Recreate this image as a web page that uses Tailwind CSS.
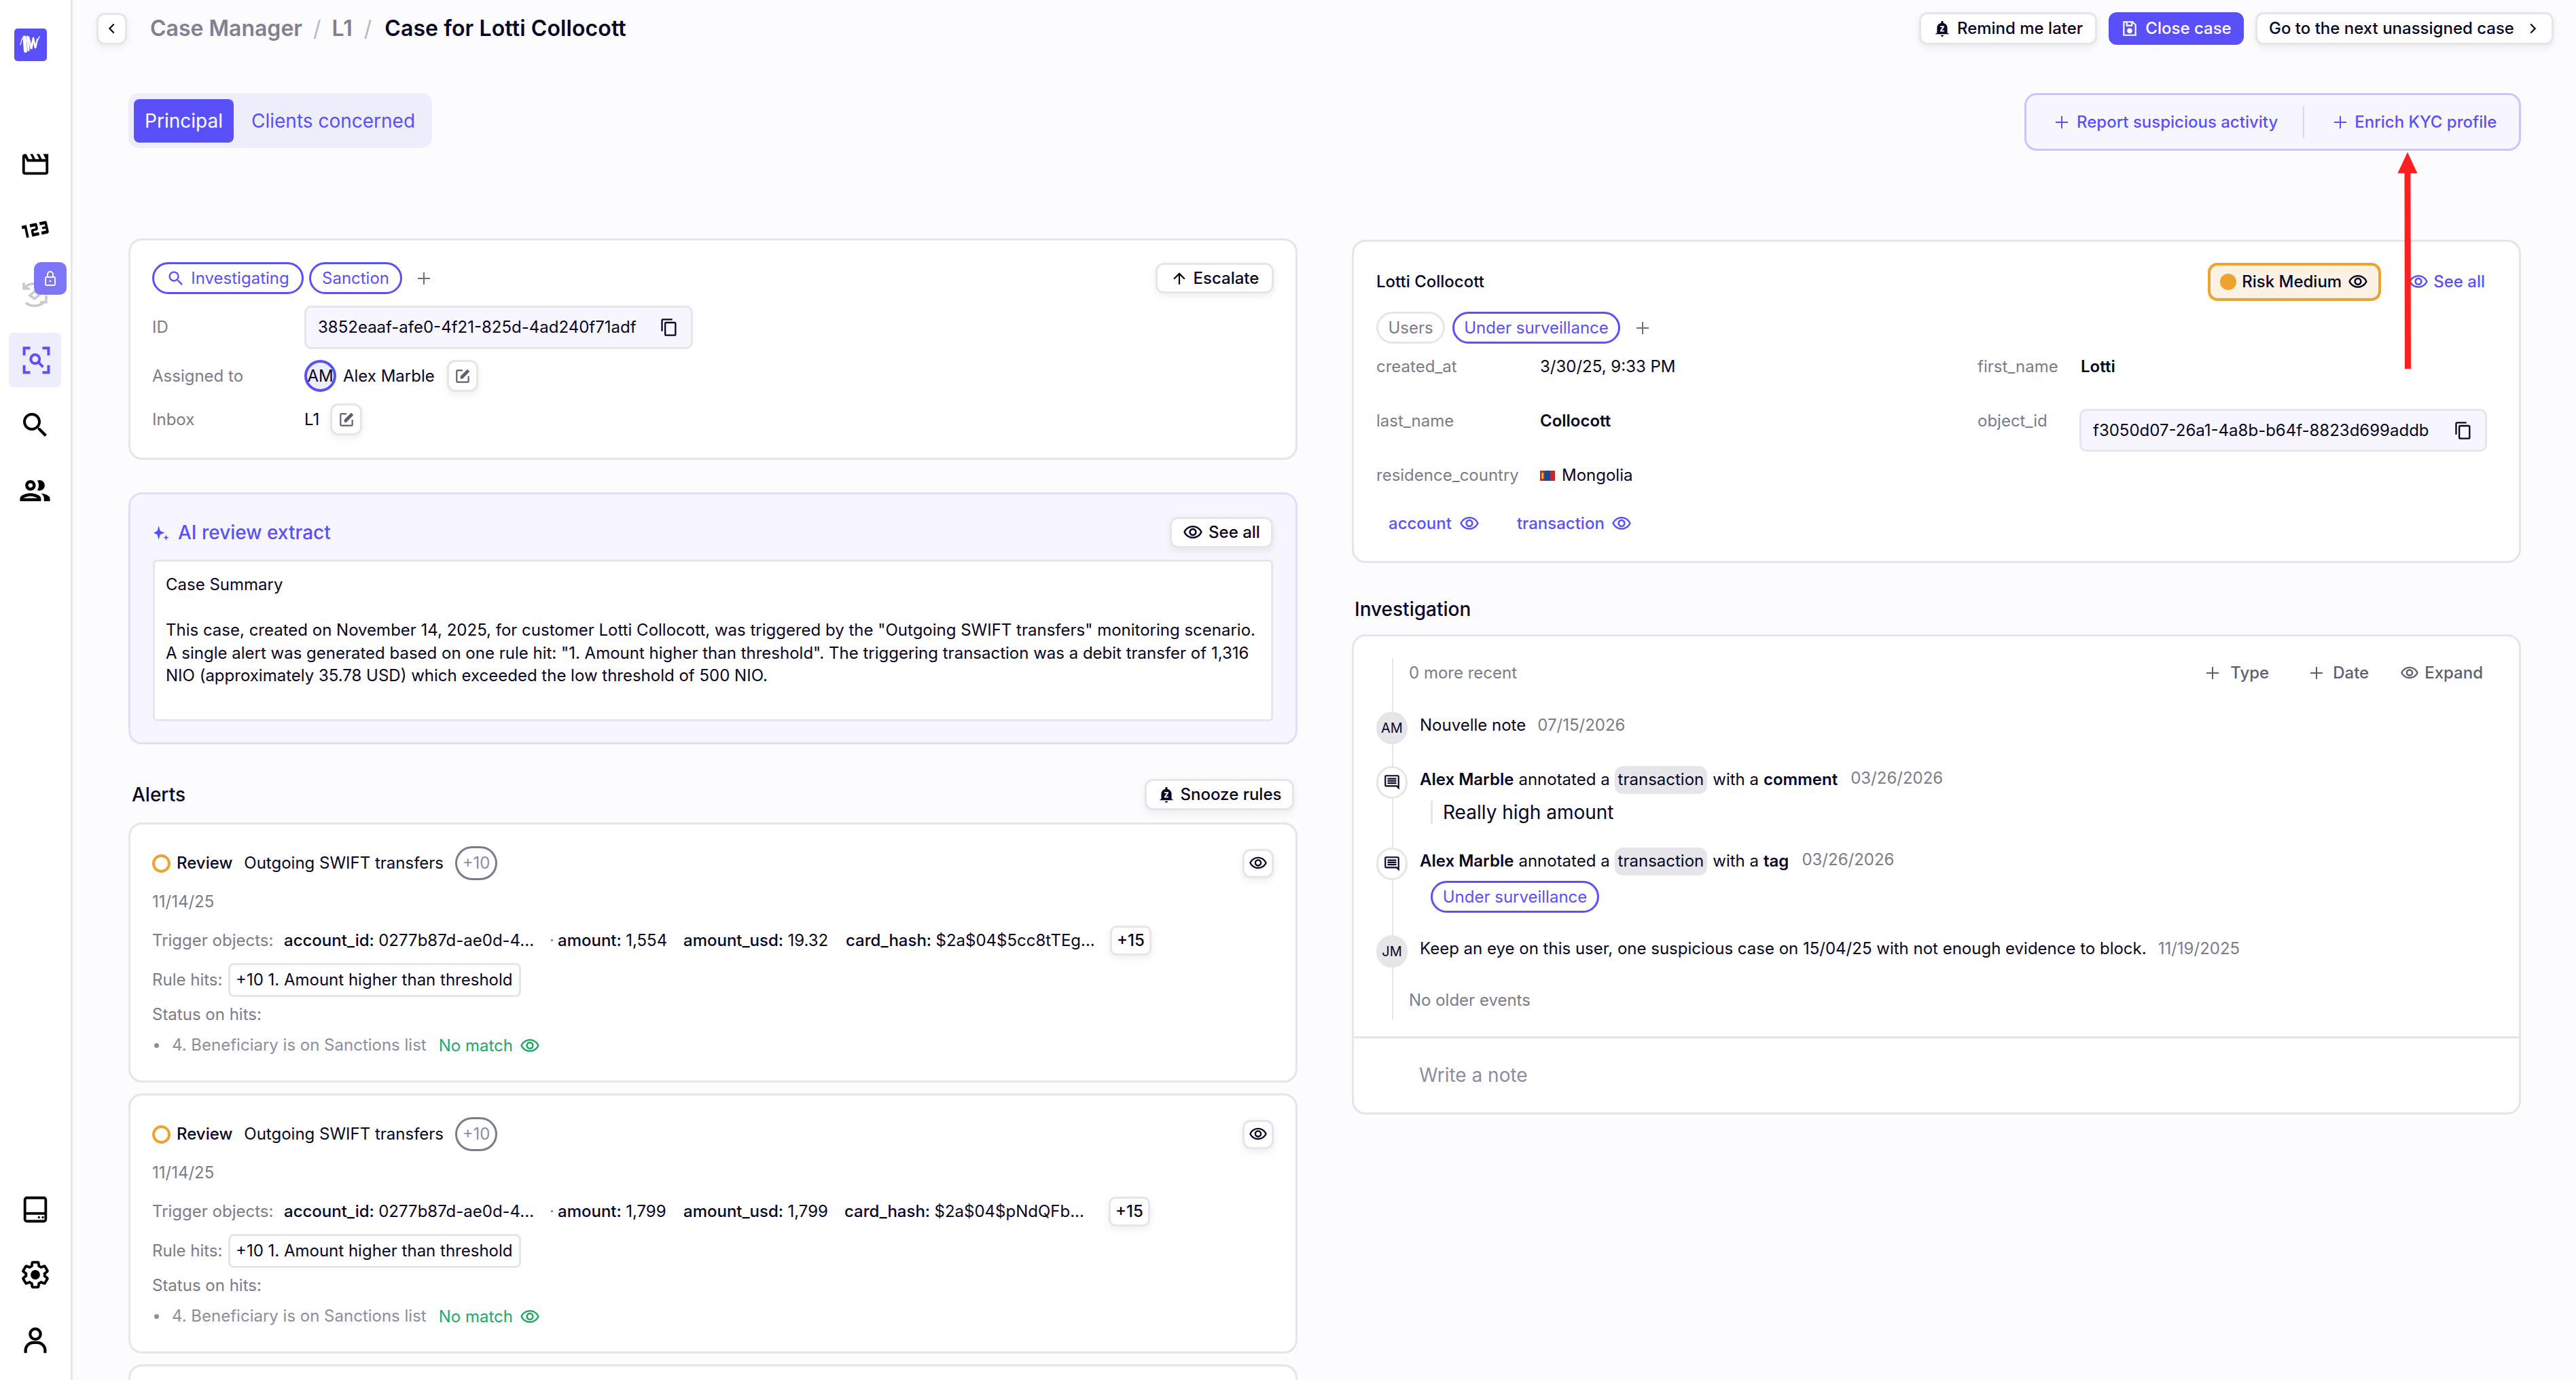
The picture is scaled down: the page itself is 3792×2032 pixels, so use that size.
<!DOCTYPE html>
<html lang="en">
<head>
    <meta charset="UTF-8">
    <title>Case for Lotti Collocott</title>
    <script src="https://cdn.jsdelivr.net/npm/@tailwindcss/browser@4"></script>
</head>
<body class="bg-[#fcfcff] text-[#080525] font-[Inter,sans-serif] text-[24px]">

<!-- Shared icons -->
<svg class="hidden">
    <symbol id="eye" viewBox="0 0 24 24"><path fill="currentColor" d="M12 6c3.79 0 7.17 2.13 8.82 5.5C19.17 14.87 15.79 17 12 17s-7.17-2.13-8.82-5.5C4.83 8.13 8.21 6 12 6m0-2C7 4 2.73 7.11 1 11.5 2.73 15.89 7 19 12 19s9.27-3.11 11-7.5C21.27 7.11 17 4 12 4zm0 5c1.38 0 2.5 1.12 2.5 2.5S13.38 14 12 14s-2.5-1.12-2.5-2.5S10.62 9 12 9m0-2c-2.48 0-4.5 2.02-4.5 4.5S9.52 16 12 16s4.5-2.02 4.5-4.5S14.48 7 12 7z"/></symbol>
    <symbol id="plus" viewBox="0 0 24 24"><path fill="none" stroke="currentColor" stroke-width="2" d="M12 3v18M3 12h18"/></symbol>
    <symbol id="copy" viewBox="0 0 24 24"><path fill="currentColor" d="M16 1H4c-1.1 0-2 .9-2 2v14h2V3h12V1zm3 4H8c-1.1 0-2 .9-2 2v14c0 1.1.9 2 2 2h11c1.1 0 2-.9 2-2V7c0-1.1-.9-2-2-2zm0 16H8V7h11v14z"/></symbol>
    <symbol id="edit" viewBox="0 0 24 24"><path fill="none" stroke="currentColor" stroke-width="2" d="M12 4H5a1 1 0 0 0-1 1v14a1 1 0 0 0 1 1h14a1 1 0 0 0 1-1v-7"/><path fill="currentColor" d="M9 15.5V12L18.5 2.5l3 3L12 15.5z"/></symbol>
    <symbol id="bell" viewBox="0 0 24 24"><path fill="currentColor" d="M12 23c1.1 0 2-.9 2-2h-4c0 1.1.9 2 2 2zm7-5v-7c0-3.07-2.13-5.64-5.5-6.32V3c0-.83-.67-1.5-1.5-1.5s-1.5.67-1.5 1.5v1.68C7.13 5.36 5 7.92 5 11v7l-2 1v.5h18V19l-2-1z"/><path fill="#fff" d="M9.3 8.5h5.4v1.6l-3.2 4.4h3.2v1.7H9.3v-1.6l3.2-4.4H9.3z"/></symbol>
    <symbol id="comment" viewBox="0 0 24 24"><path fill="currentColor" d="M21.99 4c0-1.1-.89-2-1.99-2H4c-1.1 0-2 .9-2 2v12c0 1.1.9 2 2 2h14l4 4-.01-18zM20 4v13.17L18.83 16H4V4h16zM6 12h12v2H6zm0-3h12v2H6zm0-3h12v2H6z"/></symbol>
</svg>

<div class="flex h-[2032px] overflow-hidden relative">

    <!-- Sidebar -->
    <aside class="w-[107px] shrink-0 border-r-[3px] border-[#e5e5ea] bg-white flex flex-col relative">
        <div class="h-[194px] pt-[42px] pl-[21px]">
            <svg class="w-[48px] h-[48px]" viewBox="0 0 48 48"><rect width="48" height="48" rx="5" fill="#5a50fa"/><g fill="none" stroke="#fff" stroke-linecap="round"><path stroke-width="1.200" d="M9 24l3-10"/><path stroke-width="5" d="M15 13l1.500 20"/><path stroke-width="3" d="M19 12l2 20"/><path stroke-width="3" d="M21 13l4 17 3-15"/><path stroke-width="2.500" d="M28 14l3 15 3-13"/><path stroke-width="1.500" d="M35 16l2-4"/></g></svg>
        </div>
        <div class="h-[96px] flex items-center justify-center pr-[1px]"><svg class="w-[46px] h-[46px]" viewBox="0 0 24 24"><path d="M4 6.47L5.76 10H20v8H4V6.47M22 4h-4l2 4h-3l-2-4h-2l2 4h-3l-2-4H8l2 4H7L5 4H4c-1.1 0-1.99.9-1.99 2L2 18c0 1.1.9 2 2 2h16c1.1 0 2-.9 2-2V4z"/></svg></div>
        <div class="h-[96px] flex items-center justify-center pr-[1px]"><svg class="w-[40px] h-[22px] -rotate-12" viewBox="3.500 8.500 16.500 7" preserveAspectRatio="none"><path d="M7 15H5.5v-4.5H4V9h3zM13.5 13.5h-3v-1h2c.55 0 1-.45 1-1V10c0-.55-.45-1-1-1H9v1.5h3v1h-2c-.55 0-1 .45-1 1V15h4.5zM19.5 14v-4c0-.55-.45-1-1-1H15v1.5h3v1h-2v1h2v1h-3V15h3.5c.55 0 1-.45 1-1z"/></svg></div>
        <div class="h-[96px] flex items-center justify-center pr-[1px]"><svg class="w-[37px] h-[39px]" viewBox="0 0 37 39" fill="none" stroke="#c9c9d0" stroke-width="3.500"><path d="M2 1v9h9"/><path d="M3 9c4-5 10-7 17-6"/><path d="M18 14l7 5-7 6-7-5z"/><path d="M5 31c8 6 20 6 28-2"/><path d="M35 20v10h-9"/></svg></div>
        <div class="mx-[13px] w-[77px] h-[80px] my-[8px] rounded-[6px] bg-[#eeedfb] flex items-center justify-center text-[#5a50fa]">
            <svg class="w-[43px] h-[43px] ml-[3px]" viewBox="0 0 24 24" fill="none" stroke="currentColor" stroke-width="2.200"><path d="M7 2H2v6M17 2h5v6M2 16v6h5M22 16v6h-5"/><circle cx="11" cy="11" r="3.600"/><path d="M13.500 13.500l4 4"/></svg>
        </div>
        <div class="h-[96px] flex items-center justify-center pr-[1px]"><svg class="w-[48px] h-[48px]" viewBox="0 0 24 24"><path d="M15.5 14h-.79l-.28-.27C15.41 12.59 16 11.11 16 9.5 16 5.91 13.09 3 9.5 3S3 5.91 3 9.5 5.91 16 9.5 16c1.61 0 3.09-.59 4.23-1.57l.27.28v.79l5 4.99L20.49 19l-4.99-5zm-6 0C7.01 14 5 11.99 5 9.5S7.01 5 9.5 5 14 7.01 14 9.5 11.99 14 9.5 14z"/></svg></div>
        <div class="h-[96px] flex items-center justify-center pr-[1px]"><svg class="w-[53px] h-[53px]" viewBox="0 0 24 24"><path d="M9 13.75c-2.34 0-7 1.17-7 3.5V19h14v-1.750c0-2.330-4.660-3.500-7-3.500zM4.340 17c.84-.58 2.870-1.250 4.660-1.250s3.820.67 4.660 1.250H4.340zM9 12c1.930 0 3.500-1.570 3.500-3.500S10.930 5 9 5 5.500 6.570 5.500 8.500 7.070 12 9 12zm0-5c.83 0 1.500.67 1.500 1.500S9.830 10 9 10s-1.500-.67-1.500-1.500S8.170 7 9 7zm7.040 6.810c1.160.84 1.960 1.960 1.960 3.440V19h4v-1.750c0-2.020-3.500-3.170-5.960-3.440zM15 12c1.930 0 3.500-1.570 3.500-3.500S16.930 5 15 5c-.54 0-1.040.13-1.500.35.630.89 1 1.980 1 3.150s-.37 2.260-1 3.150c.46.22.96.35 1.500.35z"/></svg></div>

        <div class="mt-auto pb-[11px]">
            <div class="h-[96px] flex items-center justify-center pr-[1px]"><svg class="w-[46px] h-[46px]" viewBox="0 0 24 24" fill="none" stroke="#000" stroke-width="2"><rect x="4" y="3" width="16" height="18" rx="1.5"/><path d="M4 15h16"/><path d="M14 18h1.5M17 18h1.5" stroke-width="1.6"/></svg></div>
            <div class="h-[96px] flex items-center justify-center pr-[1px]"><svg class="w-[46px] h-[46px]" viewBox="0 0 24 24"><path fill="none" stroke="#000" stroke-width="2" d="M19.14 12.94c.04-.3.06-.61.06-.94 0-.32-.02-.64-.07-.94l2.03-1.58c.18-.14.23-.41.12-.61l-1.92-3.32c-.12-.22-.37-.29-.59-.22l-2.39.96c-.5-.38-1.03-.7-1.62-.94L14.4 2.81c-.04-.24-.24-.41-.48-.41h-3.84c-.24 0-.43.17-.47.41L9.25 5.35c-.59.24-1.13.57-1.62.94l-2.39-.96c-.22-.08-.47 0-.59.22L2.74 8.87c-.12.21-.08.47.12.61l2.03 1.58c-.05.3-.09.63-.09.94s.02.64.07.94l-2.03 1.58c-.18.14-.23.41-.12.61l1.92 3.32c.12.22.37.29.59.22l2.39-.96c.5.38 1.03.7 1.62.94l.36 2.54c.05.24.24.41.48.41h3.84c.24 0 .44-.17.47-.41l.36-2.54c.59-.24 1.13-.56 1.62-.94l2.39.96c.22.08.47 0 .59-.22l1.92-3.32c.12-.22.07-.47-.12-.61z"/><circle cx="12" cy="12" r="3.6"/></svg></div>
            <div class="h-[96px] flex items-center justify-center pr-[1px]"><svg class="w-[46px] h-[46px]" viewBox="0 0 24 24" fill="none" stroke="#000" stroke-width="2.2"><circle cx="12" cy="7.5" r="4"/><path d="M4.5 22v-2a6 6 0 0 1 6-6h3a6 6 0 0 1 6 6v2"/></svg></div>
        </div>

        <!-- Lock badge over the nav icon -->
        <div class="absolute left-[50px] top-[386px] w-[48px] h-[48px] rounded-[10px] bg-[#7d77f8] flex items-center justify-center">
            <svg class="w-[24px] h-[24px]" viewBox="0 0 24 24" fill="none" stroke="#fff" stroke-width="1.800"><rect x="5" y="10" width="14" height="12" rx="1.500"/><path d="M8 10V6a4 4 0 0 1 8 0v4"/><circle cx="12" cy="16" r="1.300" fill="#fff" stroke="none"/></svg>
        </div>
    </aside>

    <!-- Main -->
    <main class="flex-1 min-w-0">

        <!-- Top bar -->
        <header class="h-[48px] mt-[18px] pl-[35px] pr-[33px] flex items-center">
            <button class="w-[45px] h-[47px] rounded-[12px] border-[3px] border-[#e5e5ea] bg-white shadow-[0_4px_12px_rgba(0,0,0,0.07)] flex items-center justify-center">
                <svg class="w-[22px] h-[22px]" viewBox="0 0 24 24" fill="none" stroke="#080525" stroke-width="2.4"><path d="M15 5l-7 7 7 7"/></svg>
            </button>
            <div class="ml-[34px] flex items-center text-[32px] font-semibold">
                <span class="text-[#81808f]">Case Manager</span>
                <span class="text-[#b9b9c3] ml-[16px] font-normal">/</span>
                <span class="text-[#81808f] ml-[16px]">L1</span>
                <span class="text-[#b9b9c3] ml-[17px] font-normal">/</span>
                <span class="ml-[19px] tracking-[0.1px]">Case for Lotti Collocott</span>
            </div>
            <div class="ml-auto flex items-center gap-[17px]">
                <button class="h-[48px] w-[262px] rounded-[12px] border-[3px] border-[#e5e5ea] bg-white shadow-[0_4px_12px_rgba(0,0,0,0.07)] flex items-center justify-center gap-[9px] font-medium">
                    <svg class="w-[26px] h-[26px]"><use href="#bell"/></svg>Remind me later
                </button>
                <button class="h-[48px] w-[199px] rounded-[12px] bg-[#5a50fa] text-white flex items-center justify-center gap-[10px] font-medium">
                    <svg class="w-[26px] h-[26px]" viewBox="0 0 24 24" fill="none" stroke="#fff" stroke-width="2"><path d="M4 3h12l4 4v14H4z"/><path d="M8 3v5h7V3"/><circle cx="12" cy="15" r="2.5" fill="#fff"/></svg>Close case
                </button>
                <button class="h-[48px] w-[439px] rounded-[12px] border-[3px] border-[#e5e5ea] bg-white shadow-[0_4px_12px_rgba(0,0,0,0.07)] flex items-center justify-center gap-[16px] font-medium">
                    Go to the next unassigned case
                    <svg class="w-[22px] h-[22px]" viewBox="0 0 24 24" fill="none" stroke="#080525" stroke-width="2.4"><path d="M9 5l7 7-7 7"/></svg>
                </button>
            </div>
        </header>

        <div class="pl-[82px] pr-[81px]">

            <!-- Tabs and actions -->
            <div class="mt-[71px] flex justify-between items-start">
                <div class="w-[447px] h-[81px] rounded-[15px] bg-[#eeedfb] px-[8px] py-[8px] flex items-center text-[28px]">
                    <div class="w-[147px] h-[64px] rounded-[8px] bg-[#5a50fa] text-white flex items-center justify-center">Principal</div>
                    <div class="ml-[26px] text-[#5a50fa]">Clients concerned</div>
                </div>
                <div class="w-[731px] h-[85px] rounded-[18px] border-[3px] border-[#c9c6fd] bg-[#f7f6ff] flex items-center text-[#5a50fa] font-medium pl-[40px]">
                    <svg class="w-[24px] h-[24px]"><use href="#plus"/></svg>
                    <span class="ml-[10px]">Report suspicious activity</span>
                    <div class="w-[2px] h-[48px] bg-[#d9d7fd] ml-[37px]"></div>
                    <svg class="w-[24px] h-[24px] ml-[41px]"><use href="#plus"/></svg>
                    <span class="ml-[9px]">Enrich KYC profile</span>
                </div>
            </div>

            <!-- Two columns -->
            <div class="mt-[129px] grid grid-cols-[1721px_1721px] gap-x-[80px]">

                <!-- Left column -->
                <div>
                    <section class="h-[326px] rounded-[20px] border-[3px] border-[#e5e5ea] bg-white px-[32px] pt-[32px]">
                        <div class="h-[47px] flex items-center justify-between">
                            <div class="flex items-center">
                                <div class="w-[223px] h-[47px] rounded-full border-[3px] border-[#5a50fa] text-[#5a50fa] flex items-center justify-center gap-[8px]">
                                    <svg class="w-[28px] h-[28px]" viewBox="0 0 24 24"><path fill="currentColor" d="M15.5 14h-.79l-.28-.27C15.41 12.59 16 11.11 16 9.5 16 5.91 13.09 3 9.5 3S3 5.91 3 9.5 5.91 16 9.5 16c1.61 0 3.09-.59 4.23-1.57l.27.28v.79l5 4.99L20.49 19l-4.99-5zm-6 0C7.01 14 5 11.99 5 9.5S7.01 5 9.5 5 14 7.01 14 9.5 11.99 14 9.5 14z"/></svg>Investigating
                                </div>
                                <div class="ml-[8px] w-[137px] h-[47px] rounded-full border-[3px] border-[#5a50fa] text-[#5a50fa] flex items-center justify-center">Sanction</div>
                                <svg class="ml-[20px] w-[24px] h-[24px] text-[#6f6e80]"><use href="#plus"/></svg>
                            </div>
                            <button class="w-[174px] h-[45px] rounded-[12px] border-[3px] border-[#e5e5ea] bg-white shadow-[0_4px_12px_rgba(0,0,0,0.07)] flex items-center justify-center gap-[8px] font-medium">
                                <svg class="w-[26px] h-[26px]" viewBox="0 0 24 24"><path d="M4 12l1.41 1.41L11 7.83V20h2V7.83l5.58 5.59L20 12l-8-8-8 8z"/></svg>Escalate
                            </button>
                        </div>
                        <div class="mt-[17px] flex items-center">
                            <div class="w-[224px] text-[#7c7b89]">ID</div>
                            <div class="w-[572px] h-[64px] rounded-[10px] border-[3px] border-[#e5e5ea] bg-[#f7f6ff] flex items-center justify-between pl-[17px] pr-[18px]">
                                <span>3852eaaf-afe0-4f21-825d-4ad240f71adf</span>
                                <svg class="w-[28px] h-[28px]"><use href="#copy"/></svg>
                            </div>
                        </div>
                        <div class="mt-[16px] flex items-center">
                            <div class="w-[224px] text-[#7c7b89]">Assigned to</div>
                            <div class="w-[47px] h-[47px] rounded-full border-[4px] border-[#5a50fa] bg-[#eeedfb] flex items-center justify-center text-[24px]">AM</div>
                            <span class="ml-[10px]">Alex Marble</span>
                            <button class="ml-[18px] w-[46px] h-[47px] rounded-[12px] border-[3px] border-[#e5e5ea] bg-white shadow-[0_4px_12px_rgba(0,0,0,0.07)] flex items-center justify-center">
                                <svg class="w-[26px] h-[26px] text-[#5f5e6e]"><use href="#edit"/></svg>
                            </button>
                        </div>
                        <div class="mt-[17px] flex items-center">
                            <div class="w-[224px] text-[#7c7b89]">Inbox</div>
                            <span>L1</span>
                            <button class="ml-[16px] w-[47px] h-[47px] rounded-[12px] border-[3px] border-[#e5e5ea] bg-white shadow-[0_4px_12px_rgba(0,0,0,0.07)] flex items-center justify-center">
                                <svg class="w-[26px] h-[26px] text-[#5f5e6e]"><use href="#edit"/></svg>
                            </button>
                        </div>
                    </section>

                    <section class="mt-[48px] h-[371px] rounded-[20px] border-[3px] border-[#e0deff] bg-[#f7f6ff] px-[33px] pt-[33px]">
                        <div class="h-[46px] flex items-center justify-between">
                            <div class="flex items-center text-[#5a50fa] text-[28px] font-medium">
                                <svg class="w-[26px] h-[28px]" viewBox="0 0 24 24" fill="currentColor"><path d="M8 3l2 7 6 2.500-6 2.500-2 7-2-7-5-2.500 5-2.500z"/><path d="M18 15l1 3 3 1-3 1-1 3-1-3-3-1 3-1z"/></svg>
                                <span class="ml-[11px]">AI review extract</span>
                            </div>
                            <button class="w-[152px] h-[46px] rounded-[12px] border-[3px] border-[#e5e5ea] bg-white shadow-[0_4px_12px_rgba(0,0,0,0.07)] flex items-center justify-center gap-[8px] font-medium">
                                <svg class="w-[30px] h-[30px]"><use href="#eye"/></svg>See all
                            </button>
                        </div>
                        <div class="mt-[17px] h-[238px] rounded-[6px] border-[3px] border-[#e5e5ea] bg-white pl-[16px] pr-[16px] pt-[17px] leading-[33.6px]">
                            <p>Case Summary</p>
                            <p class="mt-[33.6px]">This case, created on November 14, 2025, for customer Lotti Collocott, was triggered by the "Outgoing SWIFT transfers" monitoring scenario.<br>A single alert was generated based on one rule hit: "1. Amount higher than threshold". The triggering transaction was a debit transfer of 1,316<br>NIO (approximately 35.78 USD) which exceeded the low threshold of 500 NIO.</p>
                        </div>
                    </section>

                    <div class="mt-[51px] h-[46px] flex items-center justify-between pl-[5px] pr-[5px]">
                        <h2 class="text-[28px] font-medium">Alerts</h2>
                        <button class="w-[220px] h-[46px] rounded-[12px] border-[3px] border-[#e5e5ea] bg-white shadow-[0_4px_12px_rgba(0,0,0,0.07)] flex items-center justify-center gap-[8px] font-medium">
                            <svg class="w-[26px] h-[26px]"><use href="#bell"/></svg>Snooze rules
                        </button>
                    </div>

                    <!-- Alert 1 -->
                    <article class="mt-[18px] h-[383px] rounded-[20px] border-[3px] border-[#e5e5ea] bg-white px-[32px] pt-[32px]">
                        <div class="h-[50px] flex items-center">
                            <div class="w-[27px] h-[27px] rounded-full border-[4px] border-[#eea32f]"></div>
                            <span class="ml-[9px] font-medium">Review</span>
                            <span class="ml-[17px]">Outgoing SWIFT transfers</span>
                            <div class="ml-[17px] w-[62px] h-[50px] rounded-full border-[3px] border-[#7c7b89] text-[#8e8d9b] flex items-center justify-center">+10</div>
                            <button class="ml-auto w-[46px] h-[43px] rounded-[12px] border-[3px] border-[#e5e5ea] bg-white shadow-[0_4px_12px_rgba(0,0,0,0.07)] flex items-center justify-center">
                                <svg class="w-[28px] h-[28px]"><use href="#eye"/></svg>
                            </button>
                        </div>
                        <div class="mt-[15px] h-[34px] flex items-center text-[#7c7b89]">11/14/25</div>
                        <div class="mt-[18px] h-[44px] flex items-center whitespace-nowrap">
                            <span class="w-[194px] text-[#7c7b89]">Trigger objects:</span>
                            <span class="w-[391px] font-medium">account_id: <span class="font-normal">0277b87d-ae0d-4...</span></span>
                            <span class="w-[12px] text-[#7c7b89]">·</span>
                            <span class="w-[185px] font-medium">amount: <span class="font-normal">1,554</span></span>
                            <span class="w-[239px] font-medium">amount_usd: <span class="font-normal">19.32</span></span>
                            <span class="w-[389px] font-medium">card_hash: <span class="font-normal">$2a$04$5cc8tTEg...</span></span>
                            <button class="w-[61px] h-[44px] rounded-[10px] border-[3px] border-[#e5e5ea] bg-white shadow-[0_4px_12px_rgba(0,0,0,0.07)] font-medium">+15</button>
                        </div>
                        <div class="mt-[11px] h-[50px] flex items-center">
                            <span class="w-[112px] text-[#7c7b89]">Rule hits:</span>
                            <div class="w-[431px] h-[50px] rounded-[8px] border-[3px] border-[#e5e5ea] bg-white flex items-center pl-[8px]">+10 1. Amount higher than threshold</div>
                        </div>
                        <div class="mt-[9px] h-[34px] flex items-center text-[#7c7b89]">Status on hits:</div>
                        <div class="mt-[11px] h-[34px] flex items-center">
                            <div class="ml-[3px] w-[7px] h-[7px] rounded-full bg-[#8e8d9b]"></div>
                            <span class="ml-[19px] text-[#8e8d9b]">4. Beneficiary is on Sanctions list</span>
                            <span class="ml-[18px] mt-[2px] text-[#22a868]">No match</span>
                            <svg class="ml-[10px] mt-[2px] w-[30px] h-[30px] text-[#22a868]"><use href="#eye"/></svg>
                        </div>
                    </article>

                    <!-- Alert 2 -->
                    <article class="mt-[16px] h-[383px] rounded-[20px] border-[3px] border-[#e5e5ea] bg-white px-[32px] pt-[32px]">
                        <div class="h-[50px] flex items-center">
                            <div class="w-[27px] h-[27px] rounded-full border-[4px] border-[#eea32f]"></div>
                            <span class="ml-[9px] font-medium">Review</span>
                            <span class="ml-[17px]">Outgoing SWIFT transfers</span>
                            <div class="ml-[17px] w-[62px] h-[50px] rounded-full border-[3px] border-[#7c7b89] text-[#8e8d9b] flex items-center justify-center">+10</div>
                            <button class="ml-auto w-[46px] h-[43px] rounded-[12px] border-[3px] border-[#e5e5ea] bg-white shadow-[0_4px_12px_rgba(0,0,0,0.07)] flex items-center justify-center">
                                <svg class="w-[28px] h-[28px]"><use href="#eye"/></svg>
                            </button>
                        </div>
                        <div class="mt-[15px] h-[34px] flex items-center text-[#7c7b89]">11/14/25</div>
                        <div class="mt-[18px] h-[44px] flex items-center whitespace-nowrap">
                            <span class="w-[194px] text-[#7c7b89]">Trigger objects:</span>
                            <span class="w-[391px] font-medium">account_id: <span class="font-normal">0277b87d-ae0d-4...</span></span>
                            <span class="w-[12px] text-[#7c7b89]">·</span>
                            <span class="w-[185px] font-medium">amount: <span class="font-normal">1,799</span></span>
                            <span class="w-[237px] font-medium">amount_usd: <span class="font-normal">1,799</span></span>
                            <span class="w-[389px] font-medium">card_hash: <span class="font-normal">$2a$04$pNdQFb...</span></span>
                            <button class="w-[61px] h-[44px] rounded-[10px] border-[3px] border-[#e5e5ea] bg-white shadow-[0_4px_12px_rgba(0,0,0,0.07)] font-medium">+15</button>
                        </div>
                        <div class="mt-[11px] h-[50px] flex items-center">
                            <span class="w-[112px] text-[#7c7b89]">Rule hits:</span>
                            <div class="w-[431px] h-[50px] rounded-[8px] border-[3px] border-[#e5e5ea] bg-white flex items-center pl-[8px]">+10 1. Amount higher than threshold</div>
                        </div>
                        <div class="mt-[9px] h-[34px] flex items-center text-[#7c7b89]">Status on hits:</div>
                        <div class="mt-[11px] h-[34px] flex items-center">
                            <div class="ml-[3px] w-[7px] h-[7px] rounded-full bg-[#8e8d9b]"></div>
                            <span class="ml-[19px] text-[#8e8d9b]">4. Beneficiary is on Sanctions list</span>
                            <span class="ml-[18px] mt-[2px] text-[#22a868]">No match</span>
                            <svg class="ml-[10px] mt-[2px] w-[30px] h-[30px] text-[#22a868]"><use href="#eye"/></svg>
                        </div>
                    </article>

                    <!-- Alert 3, cut by the window -->
                    <article class="mt-[16px] h-[383px] rounded-[20px] border-[3px] border-[#e5e5ea] bg-white"></article>
                </div>

                <!-- Right column -->
                <div class="pt-[2px]">
                    <section class="h-[476px] rounded-[20px] border-[3px] border-[#e5e5ea] bg-white pl-[33px] pr-[33px] pt-[31px]">
                        <div class="h-[56px] flex items-center">
                            <span class="font-medium">Lotti Collocott</span>
                            <div class="ml-auto w-[255px] h-[56px] rounded-[14px] border-[4px] border-[#eea32f] bg-[#fbf2e4] flex items-center pl-[14px]">
                                <div class="w-[24px] h-[24px] rounded-full bg-[#eea32f]"></div>
                                <span class="ml-[8px] font-medium">Risk Medium</span>
                                <svg class="ml-[9px] w-[30px] h-[30px]"><use href="#eye"/></svg>
                            </div>
                            <div class="ml-[40px] mr-[17px] flex items-center text-[#5a50fa] gap-[7px] font-medium">
                                <svg class="w-[30px] h-[30px]"><use href="#eye"/></svg>See all
                            </div>
                        </div>
                        <div class="mt-[16px] h-[47px] flex items-center">
                            <div class="w-[101px] h-[47px] rounded-full border-[3px] border-[#e5e5ea] text-[#7c7b89] flex items-center justify-center">Users</div>
                            <div class="ml-[11px] w-[247px] h-[47px] rounded-full border-[3px] border-[#5a50fa] text-[#5a50fa] flex items-center justify-center">Under surveillance</div>
                            <svg class="ml-[21px] w-[24px] h-[24px] text-[#6f6e80]"><use href="#plus"/></svg>
                        </div>
                        <div class="mt-[14px] h-[40px] flex items-center">
                            <span class="w-[241px] text-[#7c7b89]">created_at</span>
                            <span class="w-[644px]">3/30/25, 9:33 PM</span>
                            <span class="w-[152px] text-[#7c7b89]">first_name</span>
                            <span class="font-semibold">Lotti</span>
                        </div>
                        <div class="mt-[40px] h-[40px] flex items-start">
                            <span class="h-[40px] leading-[40px] w-[241px] text-[#7c7b89]">last_name</span>
                            <span class="h-[40px] leading-[40px] w-[644px] font-semibold">Collocott</span>
                            <span class="h-[40px] leading-[40px] w-[150px] text-[#7c7b89]">object_id</span>
                            <div class="mt-[2px] w-[600px] h-[63px] shrink-0 rounded-[10px] border-[3px] border-[#e5e5ea] bg-[#f7f6ff] flex items-center justify-between pl-[17px] pr-[18px]">
                                <span>f3050d07-26a1-4a8b-b64f-8823d699addb</span>
                                <svg class="w-[28px] h-[28px]"><use href="#copy"/></svg>
                            </div>
                        </div>
                        <div class="mt-[40px] h-[40px] flex items-center">
                            <span class="w-[241px] text-[#7c7b89]">residence_country</span>
                            <svg class="w-[22px] h-[15px]" viewBox="0 0 22 15"><rect width="22" height="15" fill="#c4272f"/><rect x="7" width="8" height="15" fill="#015197"/><rect x="2.500" y="3" width="2.500" height="9" fill="#f9cf02"/></svg>
                            <span class="ml-[10px]">Mongolia</span>
                        </div>
                        <div class="mt-[31px] h-[40px] flex items-center text-[#5a50fa] font-medium pl-[18px]">
                            <span>account</span>
                            <svg class="ml-[11px] w-[30px] h-[30px]"><use href="#eye"/></svg>
                            <span class="ml-[55px]">transaction</span>
                            <svg class="ml-[10px] w-[30px] h-[30px]"><use href="#eye"/></svg>
                        </div>
                    </section>

                    <h2 class="mt-[48px] h-[40px] flex items-center pl-[4px] text-[28px] font-medium">Investigation</h2>

                    <section class="mt-[17px] h-[707px] rounded-[20px] border-[3px] border-[#e5e5ea] bg-white relative">
                        <div class="absolute left-[56px] top-[32px] h-[532px] w-[2px] bg-[#e5e5ea]"></div>
                        <div class="relative pl-[33px] pr-[33px] pt-[34px]">
                            <div class="h-[40px] flex items-center text-[#7c7b89]">
                                <span class="ml-[48px]">0 more recent</span>
                                <div class="ml-auto mr-[20px] flex items-center font-medium text-[#5f5e6e]">
                                    <svg class="w-[24px] h-[24px]"><use href="#plus"/></svg>
                                    <span class="ml-[14px]">Type</span>
                                    <svg class="ml-[58px] w-[24px] h-[24px]"><use href="#plus"/></svg>
                                    <span class="ml-[12px]">Date</span>
                                    <svg class="ml-[46px] w-[28px] h-[28px]"><use href="#eye"/></svg>
                                    <span class="ml-[8px]">Expand</span>
                                </div>
                            </div>

                            <div class="mt-[37px] h-[48px] flex items-start">
                                <div class="w-[46px] h-[48px] shrink-0 rounded-full bg-[#e5e5ea] flex items-center justify-center text-[20px]">AM</div>
                                <div class="ml-[18px] h-[40px] flex items-center">Nouvelle note<span class="ml-[17px] text-[#7c7b89]">07/15/2026</span></div>
                            </div>

                            <div class="mt-[32px] h-[48px] flex items-start">
                                <div class="w-[46px] h-[48px] shrink-0 rounded-full border-[3px] border-[#e5e5ea] bg-white flex items-center justify-center"><svg class="w-[26px] h-[26px]"><use href="#comment"/></svg></div>
                                <div class="ml-[18px] h-[40px] flex items-center whitespace-nowrap">
                                    <b class="font-semibold">Alex Marble</b><span class="ml-[7px]">annotated a</span>
                                    <span class="ml-[7px] h-[41px] px-[5px] rounded-[12px] bg-[#e5e5ea] flex items-center">transaction</span>
                                    <span class="ml-[8px]">with a</span><b class="ml-[7px] font-semibold">comment</b>
                                    <span class="ml-[19px] -mt-[4px] text-[#7c7b89]">03/26/2026</span>
                                </div>
                            </div>
                            <div class="mt-[3px] ml-[80px] h-[34px] border-l-[3px] border-[#e5e5ea] pl-[15px] flex items-center text-[28px]">Really high amount</div>

                            <div class="mt-[35px] h-[48px] flex items-start">
                                <div class="w-[46px] h-[48px] shrink-0 rounded-full border-[3px] border-[#e5e5ea] bg-white flex items-center justify-center"><svg class="w-[26px] h-[26px]"><use href="#comment"/></svg></div>
                                <div class="ml-[18px] h-[40px] flex items-center whitespace-nowrap">
                                    <b class="font-semibold">Alex Marble</b><span class="ml-[7px]">annotated a</span>
                                    <span class="ml-[7px] h-[41px] px-[5px] rounded-[12px] bg-[#e5e5ea] flex items-center">transaction</span>
                                    <span class="ml-[8px]">with a</span><b class="ml-[7px] font-semibold">tag</b>
                                    <span class="ml-[19px] -mt-[4px] text-[#7c7b89]">03/26/2026</span>
                                </div>
                            </div>
                            <div class="mt-[1px] ml-[80px] w-[248px] h-[47px] rounded-full border-[3px] border-[#5a50fa] text-[#5a50fa] flex items-center justify-center">Under surveillance</div>

                            <div class="mt-[33px] h-[48px] flex items-start">
                                <div class="w-[46px] h-[48px] shrink-0 rounded-full bg-[#e5e5ea] flex items-center justify-center text-[20px]">JM</div>
                                <div class="ml-[18px] h-[40px] flex items-center whitespace-nowrap">Keep an eye on this user, one suspicious case on 15/04/25 with not enough evidence to block.<span class="ml-[17px] text-[#7c7b89]">11/19/2025</span></div>
                            </div>

                            <div class="mt-[28px] h-[40px] flex items-center text-[#7c7b89] ml-[48px]">No older events</div>
                        </div>
                        <div class="mt-[33px] border-t-[3px] border-[#e5e5ea] h-[111px] pl-[96px] flex items-center text-[28px] text-[#8e8d9b]">Write a note</div>
                    </section>
                </div>
            </div>
        </div>
    </main>

    <!-- Red annotation arrow -->
    <svg class="absolute left-[3525px] top-[224px] w-[38px] h-[320px]" viewBox="0 0 38 320"><path fill="#fe2020" d="M19 0 33.500 31H23.500L24 319H15L14.500 31H4.500z"/></svg>
</div>

</body>
</html>
